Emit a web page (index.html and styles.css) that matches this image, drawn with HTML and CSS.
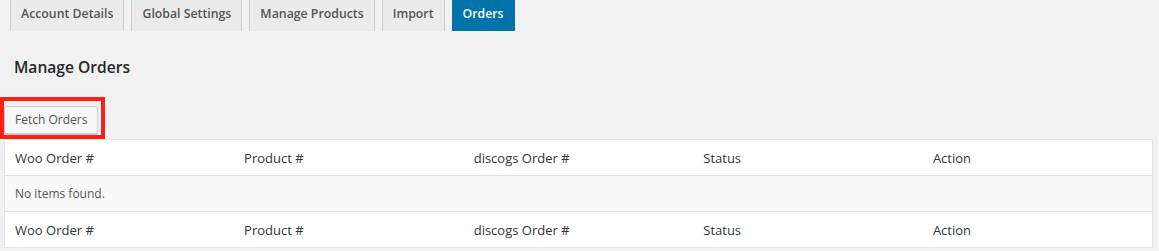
FILE: index.html
```html
<!DOCTYPE html>
<html lang="en">
<head>
<meta charset="utf-8">
<title>Manage Orders</title>
<link rel="stylesheet" href="styles.css">
</head>
<body>
<div class="wrap">
  <nav class="nav-tabs">
    <a class="nav-tab">Account Details</a>
    <a class="nav-tab">Global Settings</a>
    <a class="nav-tab">Manage Products</a>
    <a class="nav-tab">Import</a>
    <a class="nav-tab active">Orders</a>
  </nav>
  <h2 class="title">Manage Orders</h2>
  <div class="tablenav">
    <button class="button" type="button">Fetch Orders</button>
  </div>
  <table class="list-table">
    <thead>
      <tr><th>Woo Order #</th><th>Product #</th><th>discogs Order #</th><th>Status</th><th>Action</th></tr>
    </thead>
    <tbody>
      <tr class="no-items"><td colspan="5">No items found.</td></tr>
    </tbody>
    <tfoot>
      <tr><th>Woo Order #</th><th>Product #</th><th>discogs Order #</th><th>Status</th><th>Action</th></tr>
    </tfoot>
  </table>
</div>
</body>
</html>
```
FILE: styles.css
```css
html, body {
  margin: 0;
  padding: 0;
  background: #f1f1f1;
}
body {
  font-family: "Open Sans", "Noto Sans", sans-serif;
  color: #444;
  font-size: 13px;
}
.wrap {
  padding: 0 6px 0 4px;
}
.nav-tabs {
  display: flex;
  gap: 7px;
  margin: -4px 0 0 6px;
}
.nav-tab {
  display: block;
  padding: 5px 10px;
  line-height: 24px;
  font-size: 12.3px;
  font-weight: 600;
  color: #555;
  background: #ebebeb;
  border: 1px solid #ccc;
  border-bottom: none;
}
.nav-tab.active {
  background: #0073aa;
  border-color: #0073aa;
  color: #fff;
}
.title {
  margin: 0;
  padding: 24px 0 0 10px;
  font-size: 15.6px;
  font-weight: 600;
  line-height: 24px;
  color: #23282d;
}
.tablenav {
  position: relative;
  padding-top: 27px;
  height: 29px;
  margin-bottom: 4px;
}
.tablenav::after {
  content: "";
  position: absolute;
  left: -4px;
  top: 18px;
  width: 97px;
  height: 34px;
  border: 4px solid #fb1f18;
}
.button {
  display: block;
  height: 28px;
  margin: 0;
  padding: 0 10px;
  font-family: inherit;
  font-size: 12px;
  line-height: 26px;
  color: #555;
  background: #f7f7f7;
  border: 1px solid #ccc;
  border-radius: 3px;
  box-shadow: 0 1px 0 #ccc;
}
.list-table {
  width: 100%;
  table-layout: fixed;
  border-collapse: collapse;
  background: #fff;
  border: 1px solid #e5e5e5;
  box-shadow: 0 1px 1px rgba(0, 0, 0, 0.04);
}
.list-table th {
  height: 35px;
  padding: 0 10px;
  text-align: left;
  font-weight: 400;
  font-size: 13px;
  color: #32373c;
}
.list-table thead th {
  border-bottom: 1px solid #e1e1e1;
}
.list-table tfoot th {
  border-top: 1px solid #e1e1e1;
}
.no-items td {
  height: 35px;
  padding: 0 10px;
  background: #f9f9f9;
  font-size: 12px;
  color: #555;
}
```
